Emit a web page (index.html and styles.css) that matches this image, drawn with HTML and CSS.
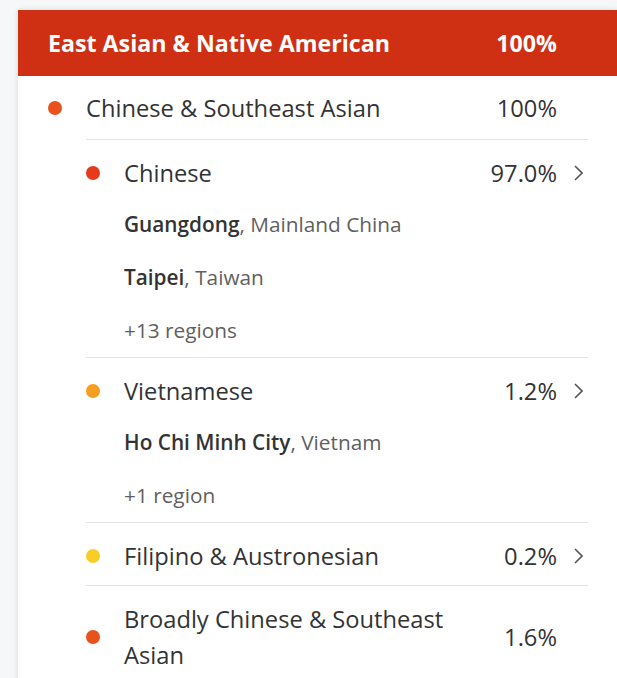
FILE: index.html
```html
<!DOCTYPE html>
<html lang="en">
<head>
  <meta charset="UTF-8">
  <title>Ancestry Composition</title>
  <link rel="stylesheet" href="styles.css">
</head>
<body>
  <div class="card">
    <div class="header">
      <span class="name">East Asian &amp; Native American</span>
      <span class="pct">100%</span>
      <span class="chev"></span>
    </div>

    <div class="group">
      <div class="row level1">
        <span class="dot-col"><span class="dot dot-orange"></span></span>
        <span class="name">Chinese &amp; Southeast Asian</span>
        <span class="pct">100%</span>
        <span class="chev"></span>
      </div>

      <div class="children">
        <div class="item">
          <div class="row">
            <span class="dot-col"><span class="dot dot-red"></span></span>
            <span class="name">Chinese</span>
            <span class="pct">97.0%</span>
            <span class="chev">
              <svg width="10" height="16" viewBox="0 0 10 16"><polyline points="2 1 9 8 2 15" fill="none" stroke="#555" stroke-width="1.6"/></svg>
            </span>
          </div>
          <ul class="regions">
            <li><strong>Guangdong</strong>, Mainland China</li>
            <li><strong>Taipei</strong>, Taiwan</li>
            <li>+13 regions</li>
          </ul>
        </div>

        <div class="item">
          <div class="row">
            <span class="dot-col"><span class="dot dot-amber"></span></span>
            <span class="name">Vietnamese</span>
            <span class="pct">1.2%</span>
            <span class="chev">
              <svg width="10" height="16" viewBox="0 0 10 16"><polyline points="2 1 9 8 2 15" fill="none" stroke="#555" stroke-width="1.6"/></svg>
            </span>
          </div>
          <ul class="regions">
            <li><strong>Ho Chi Minh City</strong>, Vietnam</li>
            <li>+1 region</li>
          </ul>
        </div>

        <div class="item">
          <div class="row">
            <span class="dot-col"><span class="dot dot-yellow"></span></span>
            <span class="name">Filipino &amp; Austronesian</span>
            <span class="pct">0.2%</span>
            <span class="chev">
              <svg width="10" height="16" viewBox="0 0 10 16"><polyline points="2 1 9 8 2 15" fill="none" stroke="#555" stroke-width="1.6"/></svg>
            </span>
          </div>
        </div>

        <div class="item">
          <div class="row">
            <span class="dot-col"><span class="dot dot-orange"></span></span>
            <span class="name">Broadly Chinese &amp; Southeast Asian</span>
            <span class="pct">1.6%</span>
            <span class="chev"></span>
          </div>
        </div>
      </div>
    </div>
  </div>
</body>
</html>
```

FILE: styles.css
```css
* {
  box-sizing: border-box;
  margin: 0;
  padding: 0;
}
body {
  font-family: 'Open Sans', 'Noto Sans', sans-serif;
  color: #333;
  background-color: #f6f7f9;
  padding: 10px 0 0 18px;
  overflow: hidden;
}
.card {
  width: 600px;
  background: white;
  box-shadow: 0 0 6px rgba(0, 0, 0, 0.12);
  min-height: 700px;
}
.header {
  height: 66px;
  display: flex;
  align-items: center;
  padding: 0 30px;
  background-color: #cf3014;
  color: white;
  font-size: 23.2px;
  font-weight: 700;
}
.name {
  flex: 1;
}
.pct {
  width: 100px;
  text-align: right;
  flex-shrink: 0;
}
.chev {
  width: 31px;
  flex-shrink: 0;
  display: flex;
  align-items: center;
  padding-left: 16px;
}
.chev svg {
  display: block;
}
.group {
  padding: 0 30px;
}
.row {
  display: flex;
  align-items: center;
  font-size: 23.7px;
  line-height: 36px;
  padding: 15px 0 11px;
}
.row.level1 {
  padding: 14px 0 13px;
}
.dot-col {
  width: 38px;
  flex-shrink: 0;
  display: flex;
  align-items: center;
}
.dot {
  width: 14px;
  height: 14px;
  border-radius: 50%;
}
.dot-orange { background-color: #e8521c; }
.dot-red { background-color: #e53a1d; }
.dot-amber { background-color: #f59e22; }
.dot-yellow { background-color: #f8cd25; }
.children {
  margin-left: 38px;
}
.item {
  border-top: 1px solid #e4e4e4;
}
.regions {
  list-style: none;
  margin-top: -4px;
  padding-left: 38px;
  font-size: 20.8px;
  line-height: 53px;
  color: #5f5f5f;
}
.regions strong {
  font-weight: 600;
  color: #333;
}
```
